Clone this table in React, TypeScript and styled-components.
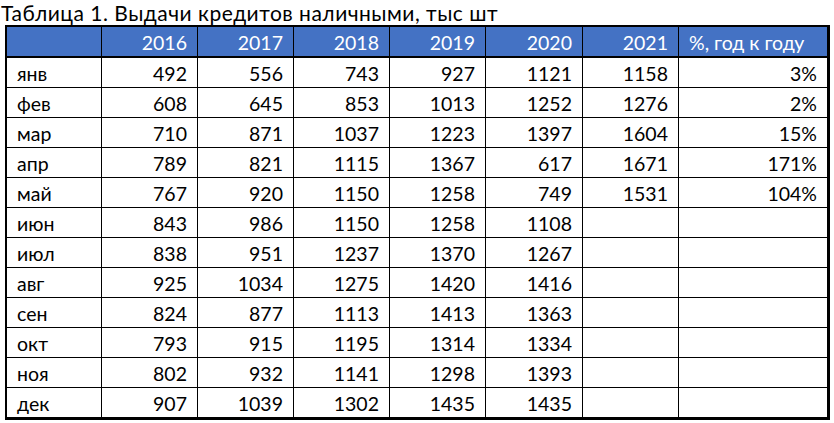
import React from 'react';
import styled, { createGlobalStyle } from 'styled-components';

const years = ['2016', '2017', '2018', '2019', '2020', '2021'];

const rows: [string, ...string[]][] = [
  ['янв', '492', '556', '743', '927', '1121', '1158', '3%'],
  ['фев', '608', '645', '853', '1013', '1252', '1276', '2%'],
  ['мар', '710', '871', '1037', '1223', '1397', '1604', '15%'],
  ['апр', '789', '821', '1115', '1367', '617', '1671', '171%'],
  ['май', '767', '920', '1150', '1258', '749', '1531', '104%'],
  ['июн', '843', '986', '1150', '1258', '1108', '', ''],
  ['июл', '838', '951', '1237', '1370', '1267', '', ''],
  ['авг', '925', '1034', '1275', '1420', '1416', '', ''],
  ['сен', '824', '877', '1113', '1413', '1363', '', ''],
  ['окт', '793', '915', '1195', '1314', '1334', '', ''],
  ['ноя', '802', '932', '1141', '1298', '1393', '', ''],
  ['дек', '907', '1039', '1302', '1435', '1435', '', ''],
];

function App() {
  return (
    <Page>
      <GlobalStyle />
      <Title>Таблица 1. Выдачи кредитов наличными, тыс шт</Title>
      <Grid>
        <HeadCell />
        {years.map((y) => (
          <HeadCell key={y} $align="right">{y}</HeadCell>
        ))}
        <HeadCell>%, год к году</HeadCell>
        {rows.map(([month, ...values]) => (
          <React.Fragment key={month}>
            <Cell>{month}</Cell>
            {values.map((v, i) => (
              <Cell key={i} $align="right">{v}</Cell>
            ))}
          </React.Fragment>
        ))}
      </Grid>
    </Page>
  );
}

const GlobalStyle = createGlobalStyle`
  body {
    margin: 0;
    background: #ffffff;
    color: #000000;
    font-family: Lato, "Liberation Sans", sans-serif;
  }
`;

const Page = styled.div`
  padding-left: 5px;
`;

const Title = styled.div`
  height: 24px;
  padding-top: 1px;
  font-size: 21px;
  line-height: 23px;
  letter-spacing: 0.5px;
  margin-left: -4px;
  white-space: nowrap;
`;

const Grid = styled.div`
  display: grid;
  grid-template-columns: 94px 95px 95px 95px 95px 96px 95px 148px;
  grid-template-rows: 30px repeat(12, 29px);
  gap: 1px;
  width: max-content;
  background: #000000;
  border: 2px solid #000000;
  border-right-width: 3px;
  border-bottom-width: 3px;
`;

const Cell = styled.div<{ $align?: 'left' | 'right' }>`
  display: flex;
  align-items: flex-end;
  justify-content: ${(p) => (p.$align === 'right' ? 'flex-end' : 'flex-start')};
  padding: 0 10px 1px 10px;
  background: #ffffff;
  font-size: 19.5px;
  line-height: 24px;
  white-space: nowrap;
`;

const HeadCell = styled(Cell)`
  background: #4472c4;
  color: #ffffff;
  border-bottom: 1px solid #000000;
`;

export default App;
